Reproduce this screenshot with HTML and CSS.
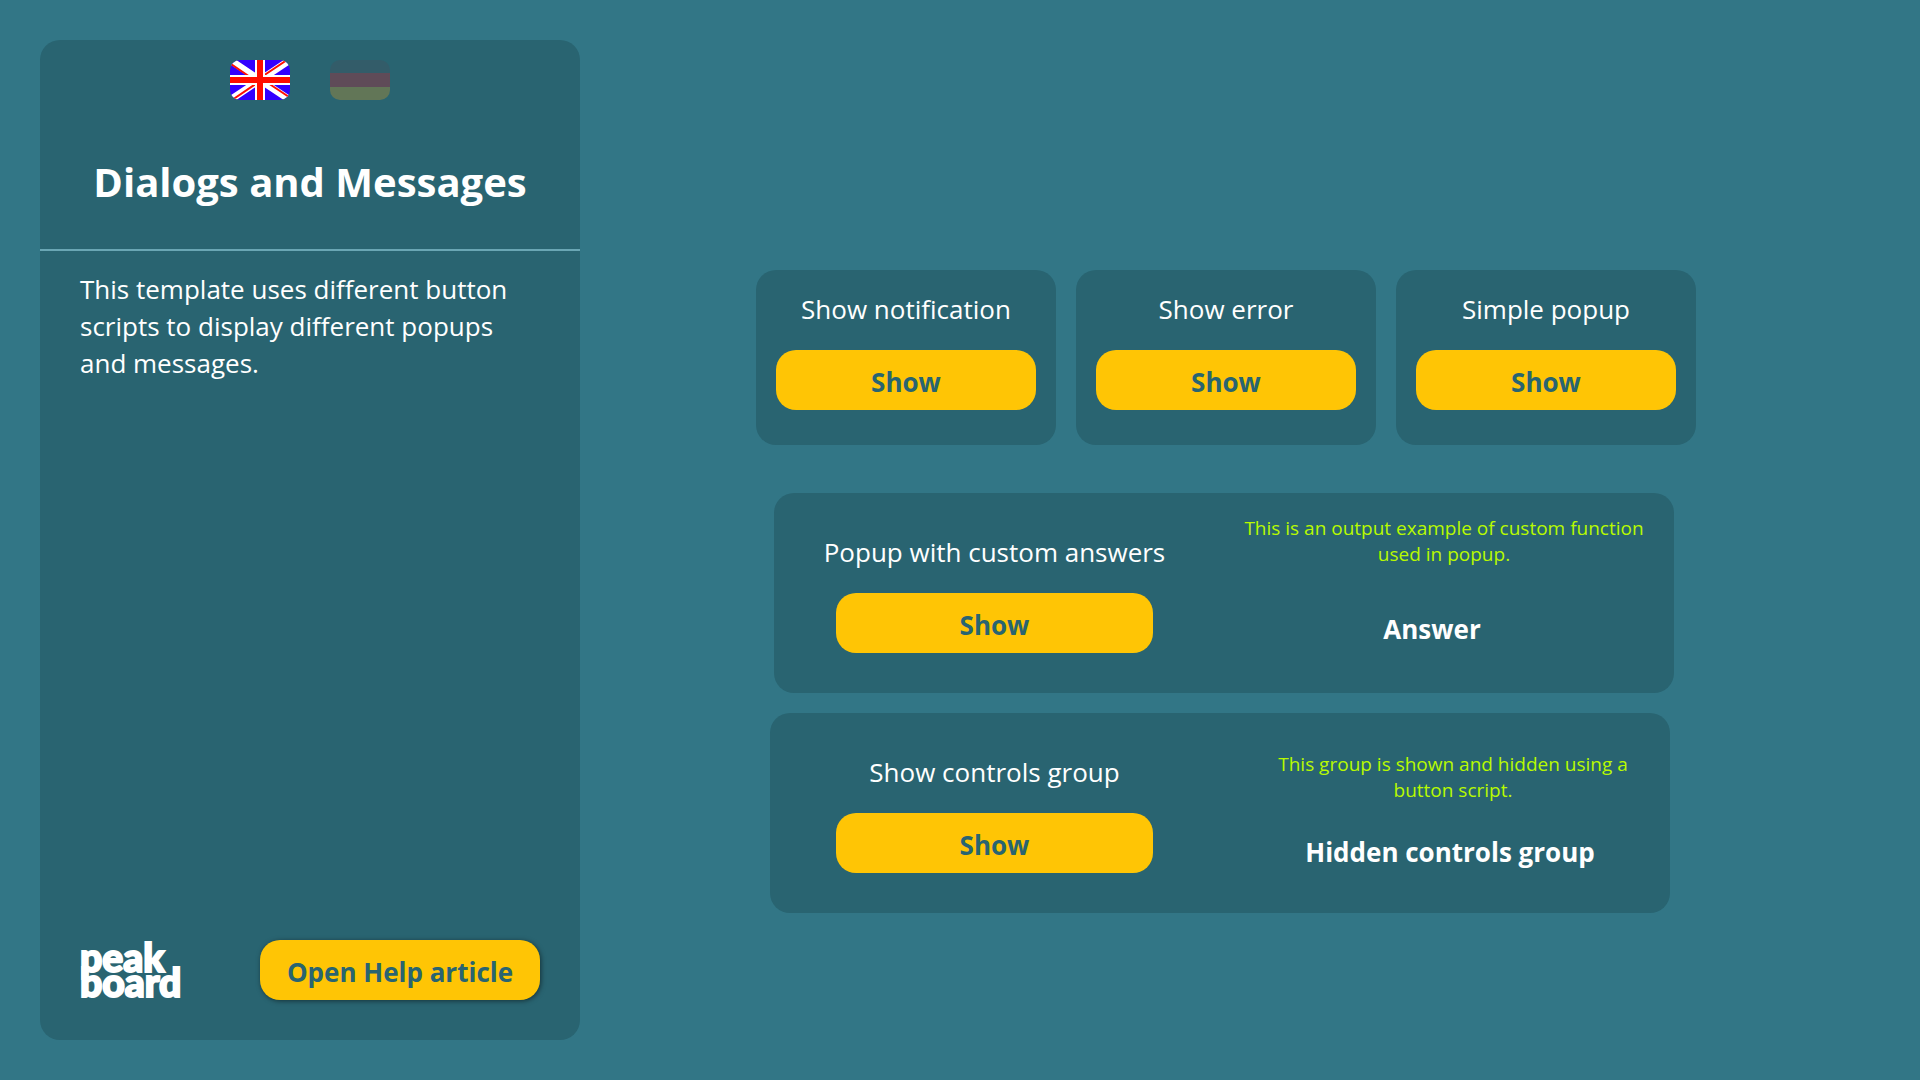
FILE: index.html
```html
<!DOCTYPE html>
<html lang="en">
<head>
<meta charset="utf-8">
<meta name="viewport" content="width=device-width, initial-scale=1">
<title>Dialogs and Messages</title>
<link rel="stylesheet" href="styles.css">
</head>
<body>
<div class="page">
  <aside class="sidebar">
    <div class="languages">
      <button class="flag" type="button" aria-label="English">
        <svg viewBox="0 0 60 40" width="60" height="40" aria-hidden="true">
          <rect width="60" height="40" fill="#3300ff"/>
          <path d="M0 0L60 40M60 0L0 40" stroke="#fff" stroke-width="7"/>
          <path d="M1 4L23 19M59 37L35 21M57 0L30 18M2 40L30 21" stroke="#ff0d00" stroke-width="2"/>
          <path d="M30 0V40M0 20H60" stroke="#fff" stroke-width="10"/>
          <path d="M30 0V40M0 20H60" stroke="#ff0d00" stroke-width="6"/>
        </svg>
      </button>
      <button class="flag flag-inactive" type="button" aria-label="Deutsch">
        <svg viewBox="0 0 60 40" width="60" height="40" aria-hidden="true">
          <rect width="60" height="14" fill="#4c4b5a"/>
          <rect y="13" width="60" height="14" fill="#dd1220"/>
          <rect y="27" width="60" height="13" fill="#e6a11c"/>
        </svg>
      </button>
    </div>
    <h1 class="title">Dialogs and Messages</h1>
    <p class="intro">This template uses different button scripts to display different popups and messages.</p>
    <div class="sidebar-footer">
      <div class="logo"><span>peak</span><span>board</span></div>
      <button class="button button-help" type="button">Open Help article</button>
    </div>
  </aside>

  <main class="content">
    <div class="cards">
      <section class="card">
        <h2 class="label">Show notification</h2>
        <button class="button" type="button">Show</button>
      </section>
      <section class="card">
        <h2 class="label">Show error</h2>
        <button class="button" type="button">Show</button>
      </section>
      <section class="card">
        <h2 class="label">Simple popup</h2>
        <button class="button" type="button">Show</button>
      </section>
    </div>
    <section class="panel panel-answers">
      <div class="action">
        <h2 class="label">Popup with custom answers</h2>
        <button class="button" type="button">Show</button>
      </div>
      <div class="info">
        <p class="hint">This is an output example of custom function used in popup.</p>
        <p class="result">Answer</p>
      </div>
    </section>
    <section class="panel panel-group">
      <div class="action">
        <h2 class="label">Show controls group</h2>
        <button class="button" type="button">Show</button>
      </div>
      <div class="info">
        <p class="hint">This group is shown and hidden using a button script.</p>
        <p class="result">Hidden controls group</p>
      </div>
    </section>
  </main>
</div>
</body>
</html>
```
FILE: styles.css
```css
:root {
  --page: #327686;
  --surface: #296471;
  --accent: #ffc505;
  --rule: #6aa6b4;
  --hint: #b8fa00;
}

* {
  box-sizing: border-box;
}

body {
  margin: 0;
  background: var(--page);
  color: #fff;
  font-family: "Segoe UI", "Open Sans", "Noto Sans", sans-serif;
  font-size: 26px;
  line-height: 38px;
}

h1,
h2,
p {
  margin: 0;
}

.page {
  display: flex;
  min-height: 100vh;
  padding: 40px 0 40px 40px;
}

.sidebar {
  display: flex;
  flex: 0 0 540px;
  flex-direction: column;
  border-radius: 20px;
  background: var(--surface);
}

.languages {
  display: flex;
  justify-content: center;
  gap: 40px;
  padding-top: 20px;
}

.flag {
  width: 60px;
  height: 40px;
  padding: 0;
  overflow: hidden;
  border: 0;
  border-radius: 10px;
  background: none;
  cursor: pointer;
}

.flag svg {
  display: block;
}

.flag-inactive {
  opacity: 0.3;
}

.title {
  padding: 54px 20px 39px;
  border-bottom: 2px solid var(--rule);
  font-size: 40px;
  line-height: 56px;
  text-align: center;
}

.intro {
  padding: 20px 40px;
  line-height: 37px;
}

.sidebar-footer {
  display: flex;
  align-items: center;
  justify-content: space-between;
  margin-top: auto;
  padding: 40px;
}

.logo {
  display: flex;
  flex-direction: column;
  font-family: Lato, sans-serif;
  font-size: 39px;
  font-weight: 900;
  line-height: 25px;
  -webkit-text-stroke: 2px #fff;
}

.button {
  width: 100%;
  height: 60px;
  padding: 3px 20px 0;
  border: 0;
  border-radius: 20px;
  background: var(--accent);
  color: var(--surface);
  font: inherit;
  font-weight: 700;
  cursor: pointer;
}

.button-help {
  width: 280px;
  box-shadow: 1px 1px 5px rgba(0, 0, 0, 0.5);
}

.content {
  display: flex;
  flex: 1;
  flex-direction: column;
  gap: 20px;
  padding: 230px 224px 0 176px;
}

.cards {
  display: grid;
  grid-template-columns: repeat(3, 1fr);
  gap: 20px;
  margin-bottom: 28px;
}

.card {
  padding: 20px 20px 35px;
  border-radius: 20px;
  background: var(--surface);
}

.label {
  margin-bottom: 22px;
  font-size: 26px;
  font-weight: 400;
  line-height: 38px;
  text-align: center;
}

.panel {
  display: flex;
  justify-content: space-between;
  min-height: 200px;
  border-radius: 20px;
  background: var(--surface);
}

.panel-answers {
  margin: 0 22px 0 18px;
  padding: 20px 20px 40px 42px;
}

.panel-group {
  margin: 0 26px 0 14px;
  padding: 20px 17px 40px 46px;
}

.action {
  flex: 0 1 357px;
  padding-top: 20px;
}

.action .button {
  display: block;
  width: 317px;
  margin: 0 auto;
}

.info {
  flex: 0 1 420px;
  padding-top: 2px;
  text-align: center;
}

.hint {
  color: var(--hint);
  font-size: 19px;
  line-height: 26px;
}

.result {
  font-weight: 700;
}

.panel-answers .result {
  padding: 43px 24px 0 0;
}

.panel-group .info {
  flex-basis: 400px;
  padding-top: 18px;
}

.panel-group .result {
  padding: 30px 6px 0 0;
}
```
